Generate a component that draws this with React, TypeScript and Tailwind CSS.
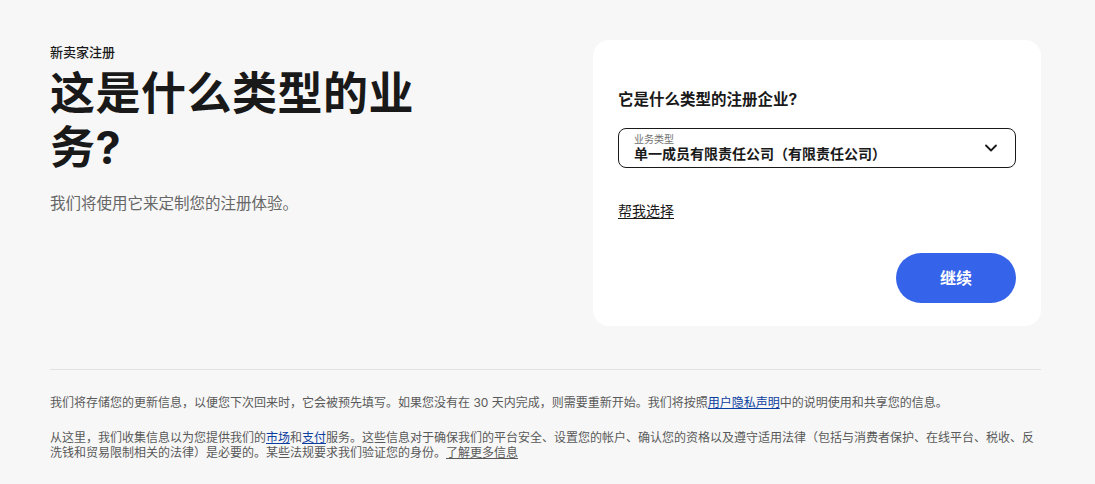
import { ChevronDown } from 'lucide-react';

const FONT = "font-['Inter','Noto_Sans_CJK_SC',sans-serif]";

export default function App() {
  return (
    <div className={`min-h-screen bg-[#f7f7f7] text-[#191919] ${FONT}`}>
      <div className="w-[991px] ml-[50px] pt-[40px]">
        <div className="flex justify-between items-start">
          {/* Left */}
          <div className="w-[390px] pt-[3px]">
            <p className="text-[13px] font-medium leading-[18px]">新卖家注册</p>
            <h1 className="mt-[6px] text-[45px] font-bold leading-[54px] tracking-[0.5px]">这是什么类型的业务?</h1>
            <p className="mt-[18px] text-[15.5px] leading-[22px] text-[#666]">我们将使用它来定制您的注册体验。</p>
          </div>

          {/* Card */}
          <div className="w-[448px] h-[286px] bg-white rounded-[16px] px-[25px] pt-[49px]">
            <h2 className="text-[15.5px] font-bold leading-[22px]">它是什么类型的注册企业?</h2>
            <div className="mt-[17px] h-[40px] border border-[#191919] rounded-[8px] flex items-center pl-[15px] pr-[14px]">
              <div className="flex-1 flex flex-col">
                <span className="text-[10px] leading-[11px] text-[#707070]">业务类型</span>
                <span className="text-[14px] font-bold leading-[18px]">单一成员有限责任公司（有限责任公司）</span>
              </div>
              <ChevronDown size={20} strokeWidth={2.2} />
            </div>
            <a href="#" className="inline-block mt-[33px] text-[14px] leading-[20px] underline underline-offset-2">帮我选择</a>
            <div className="flex justify-end mt-[31px]">
              <button className="w-[120px] h-[50px] rounded-full bg-[#3563e9] text-white text-[16px] font-bold">继续</button>
            </div>
          </div>
        </div>

        <div className="mt-[43px] border-t border-[#e2e2e2] pt-[25px] text-[12px] leading-[15px] text-[#595959]">
          <p>
            我们将存储您的更新信息，以便您下次回来时，它会被预先填写。如果您没有在 30 天内完成，则需要重新开始。我们将按照<a href="#" className="text-[#0a3d9e] underline">用户隐私声明</a>中的说明使用和共享您的信息。
          </p>
          <p className="mt-[20px]">
            从这里，我们收集信息以为您提供我们的<a href="#" className="text-[#0a3d9e] underline">市场</a>和<a href="#" className="text-[#0a3d9e] underline">支付</a>服务。这些信息对于确保我们的平台安全、设置您的帐户、确认您的资格以及遵守适用法律（包括与消费者保护、在线平台、税收、反洗钱和贸易限制相关的法律）是必要的。某些法规要求我们验证您的身份。<a href="#" className="underline">了解更多信息</a>
          </p>
        </div>
      </div>
    </div>
  );
}
